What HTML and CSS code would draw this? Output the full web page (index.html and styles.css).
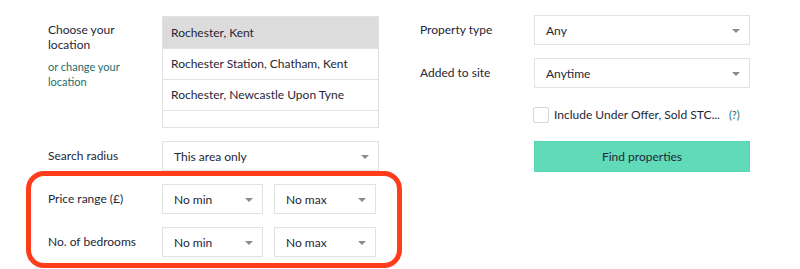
FILE: index.html
```html
<!DOCTYPE html>
<html lang="en">
<head>
    <meta charset="UTF-8">
    <meta name="viewport" content="width=device-width, initial-scale=1.0">
    <title>Property search</title>
    <link rel="stylesheet" href="styles.css">
</head>
<body>
    <div class="search">
        <div class="col col-left">
            <div class="row">
                <div class="label">
                    Choose your location
                    <a class="change" href="#">or change your location</a>
                </div>
                <ul class="locations">
                    <li class="active">Rochester, Kent</li>
                    <li>Rochester Station, Chatham, Kent</li>
                    <li>Rochester, Newcastle Upon Tyne</li>
                    <li class="empty"></li>
                </ul>
            </div>
            <div class="row">
                <div class="label">Search radius</div>
                <div class="select">This area only</div>
            </div>
            <div class="row">
                <div class="label">Price range (£)</div>
                <div class="pair">
                    <div class="select">No min</div>
                    <div class="select">No max</div>
                </div>
            </div>
            <div class="row">
                <div class="label">No. of bedrooms</div>
                <div class="pair">
                    <div class="select">No min</div>
                    <div class="select">No max</div>
                </div>
            </div>
        </div>

        <div class="col col-right">
            <div class="row">
                <div class="label">Property type</div>
                <div class="select">Any</div>
            </div>
            <div class="row">
                <div class="label">Added to site</div>
                <div class="select">Anytime</div>
            </div>
            <div class="row row-check">
                <div></div>
                <label class="check">
                    <span class="box"></span>
                    Include Under Offer, Sold STC...
                    <a class="help" href="#">(?)</a>
                </label>
            </div>
            <div class="row">
                <div></div>
                <button type="button" class="find">Find properties</button>
            </div>
        </div>

        <div class="highlight"></div>
    </div>
</body>
</html>
```

FILE: styles.css
```css
body {
    margin: 0;
    font-family: Lato, "Open Sans", sans-serif;
    font-size: 12px;
    color: #262637;
    background: #fff;
}

.search {
    position: relative;
    display: flex;
    gap: 41px;
    padding: 15px 0 0 48px;
    height: 254px;
}

.col {
    display: flex;
    flex-direction: column;
    gap: 13px;
}

.col-left .row {
    display: grid;
    grid-template-columns: 114px 217px;
}

.col-right .row {
    display: grid;
    grid-template-columns: 114px 216px;
}

.label {
    padding-top: 7px;
    line-height: 15px;
    padding-right: 20px;
}

.change {
    display: block;
    margin-top: 7px;
    color: #1d6e6e;
    text-decoration: none;
    font-size: 11px;
}

.locations {
    list-style: none;
    margin: 1px 0 0;
    padding: 0;
    border: 1px solid #e2e2e2;
    width: 215px;
}

.locations li {
    height: 30px;
    line-height: 30px;
    padding-left: 8px;
    border-bottom: 1px solid #e2e2e2;
    background: #fff;
}

.locations li.active {
    height: 31px;
    line-height: 31px;
    background: #dcdcdc;
}

.locations li.empty {
    height: 16px;
    border-bottom: none;
}

.select {
    position: relative;
    height: 28px;
    line-height: 30px;
    border: 1px solid #e2e2e2;
    padding-left: 11px;
    background: #fff;
}

.select::after {
    content: "";
    position: absolute;
    right: 9px;
    top: 13px;
    border-left: 4px solid transparent;
    border-right: 4px solid transparent;
    border-top: 4px solid #8a8a8a;
}

.pair {
    display: grid;
    grid-template-columns: 101px 102px;
    gap: 11px;
}

.row-check {
    margin-top: 6px;
}

.check {
    display: flex;
    align-items: center;
    gap: 5px;
    height: 15px;
}

.box {
    width: 14px;
    height: 14px;
    border: 1px solid #d6d6d6;
    border-radius: 2px;
    margin-left: -1px;
}

.help {
    color: #1d6e6e;
    text-decoration: none;
    margin-left: 4px;
    font-size: 11px;
}

.find {
    margin-top: 6px;
    height: 31px;
    border: 1px solid #58d6b2;
    background: #61dab9;
    color: #262637;
    font-family: inherit;
    font-size: 12px;
}

.highlight {
    position: absolute;
    left: 26px;
    top: 171px;
    width: 366px;
    height: 87px;
    border: 5px solid #ff3c1c;
    border-radius: 18px;
    pointer-events: none;
}
```
